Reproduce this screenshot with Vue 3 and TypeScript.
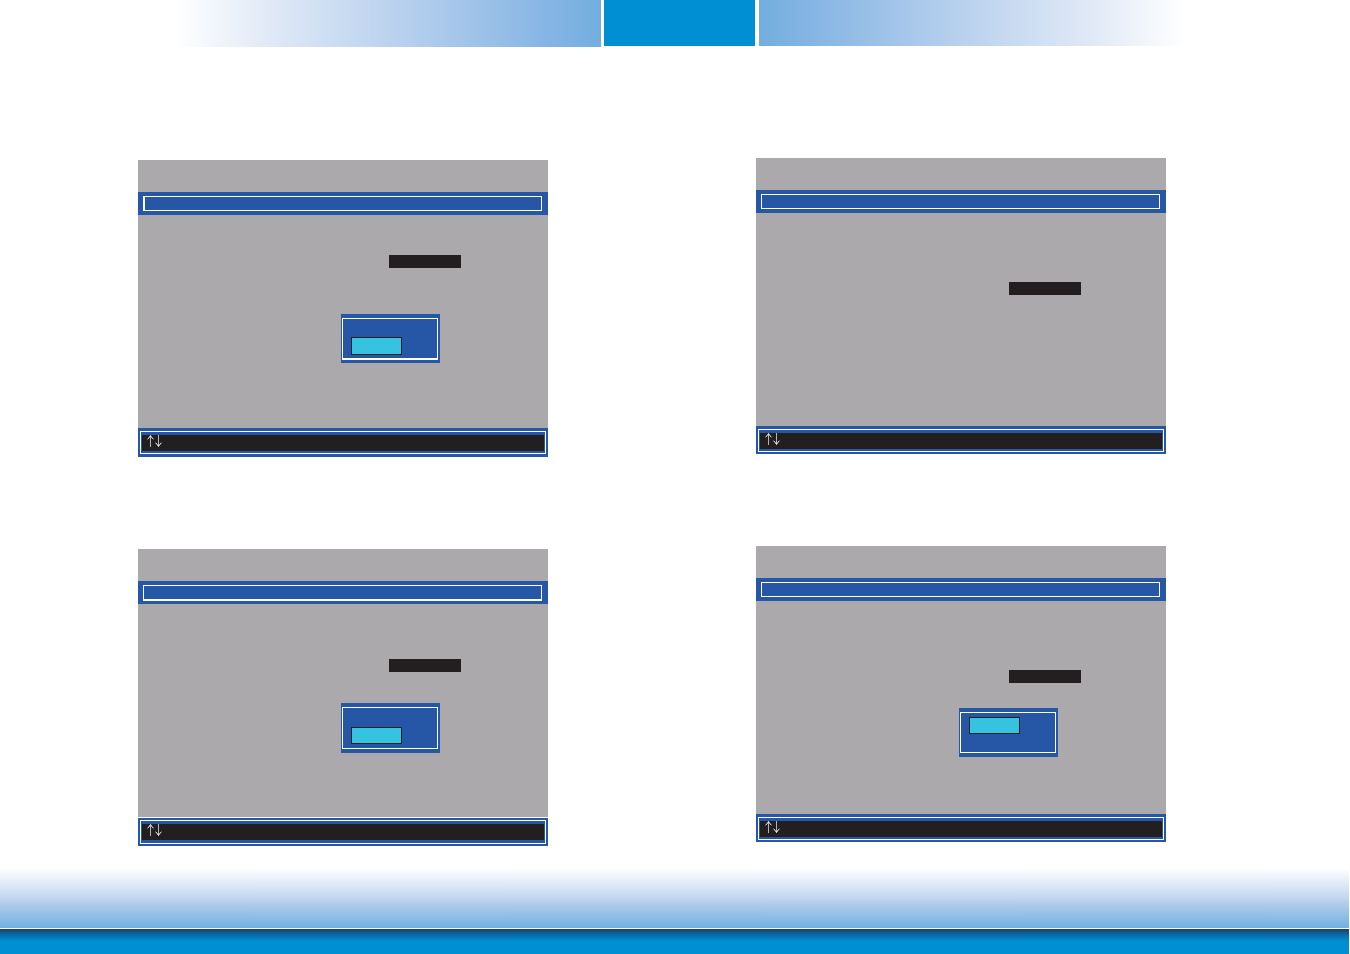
<script setup lang="ts">
interface Screen {
  id: string
  layout: string
  popup: boolean
  selected: number
}

const columns: { side: string; screens: Screen[] }[] = [
  {
    side: 'column-left',
    screens: [
      { id: 'a', layout: 'field-high', popup: true, selected: 1 },
      { id: 'b', layout: 'field-middle footer-split', popup: true, selected: 1 },
    ],
  },
  {
    side: 'column-right',
    screens: [
      { id: 'c', layout: 'field-low', popup: false, selected: 0 },
      { id: 'd', layout: 'field-low', popup: true, selected: 0 },
    ],
  },
]
</script>

<template>
  <div class="page">
    <header class="top">
      <div class="fade fade-left"></div>
      <div class="tab"></div>
      <div class="fade fade-right"></div>
    </header>

    <main class="content">
      <div v-for="column in columns" :key="column.side" class="column" :class="column.side">
        <section v-for="screen in column.screens" :key="screen.id" class="screen" :class="screen.layout">
          <div class="heading"></div>
          <div class="title-bar"><div class="title-frame"></div></div>
          <div class="body">
            <input class="field" type="text" readonly aria-label="Value" />
            <div v-if="screen.popup" class="popup">
              <div class="popup-frame">
                <button
                  v-for="n in 2"
                  :key="n"
                  type="button"
                  class="option"
                  :class="{ selected: n - 1 === screen.selected }"
                  :aria-label="`Option ${n}`"
                ></button>
              </div>
            </div>
          </div>
          <div class="keys">
            <div class="keys-frame">
              <div class="keys-bar">
                <svg class="arrows" viewBox="0 0 16 12" role="img" aria-label="Up and down arrows">
                  <path class="stem" d="M3.5 1V12M11.5 0V11" />
                  <path class="head" d="M0.5 4Q2.5 3 3.5 0.5Q4.5 3 6.5 4M8.5 8Q10.5 9 11.5 11.5Q12.5 9 14.5 8" />
                </svg>
              </div>
            </div>
          </div>
        </section>
      </div>
    </main>

    <footer class="bottom">
      <div class="bottom-fade"></div>
      <div class="bottom-bar"></div>
    </footer>
  </div>
</template>

<style>
body {
  margin: 0;
  background: #fff;
}
</style>

<style scoped>
* {
  box-sizing: border-box;
}

.page {
  display: flex;
  flex-direction: column;
  min-height: 100vh;
  padding-right: 1px;
  background: #fff;
}

.top {
  display: flex;
  align-items: flex-start;
  padding: 0 164px 0 175px;
}

.fade {
  flex: 1;
  height: 46px;
}

.fade-left {
  height: 47px;
  margin-right: 3px;
  background: linear-gradient(to right, #fff, #e0e9f6 22%, #b5cfed 55%, #82b3e3 90%, #72aede);
}

.fade-right {
  margin-left: 4px;
  background: linear-gradient(to left, #fff, #e0e9f6 22%, #b5cfed 55%, #82b3e3 90%, #72aede);
}

.tab {
  width: 151px;
  height: 46px;
  background: #008fd3;
}

.content {
  display: grid;
  grid-template-columns: 1fr 1fr;
  column-gap: 208px;
  padding: 111px 183px 0 138px;
}

.column {
  display: flex;
  flex-direction: column;
}

.column-left {
  padding-top: 2px;
  gap: 93px;
}

.column-right {
  gap: 92px;
}

.screen {
  display: flex;
  flex-direction: column;
  background: #aba9ac;
}

.heading {
  height: 32px;
}

.title-bar {
  height: 23px;
  padding: 4px 6px 0 5px;
  background: #2657a7;
}

.title-frame {
  height: 15px;
  border: 1px solid #fff;
}

.field-high .title-frame {
  border-left-width: 2px;
}

.field-middle .title-frame {
  height: 16px;
  border-bottom-width: 2px;
}

.body {
  display: flex;
  flex-direction: column;
  align-items: flex-start;
  min-height: 213px;
}

.field {
  width: 72px;
  height: 13px;
  margin: 0 0 0 251px;
  padding: 0;
  border: 0;
  border-radius: 0;
  outline: 0;
  background: #231f20;
  color: #fff;
  font: 10px "Liberation Sans", Arial, sans-serif;
}

.popup {
  height: 49px;
  width: 99px;
  margin-left: 203px;
  padding: 4px 2px 0 1px;
  background: #2657a7;
}

.popup-frame {
  display: flex;
  flex-direction: column;
  gap: 1px;
  height: 41px;
  padding: 4px 8px 0;
  border: 1px solid #fff;
}

.option {
  flex-shrink: 0;
  width: 51px;
  height: 17px;
  padding: 0;
  border: 1px solid transparent;
  border-radius: 0;
  background: transparent;
}

.option:not(.selected) {
  height: 13px;
}

.option.selected {
  border-color: #231f20;
  background: #36c3e0;
}

.field-high .body {
  padding-top: 40px;
}

.field-high .popup {
  margin-top: 46px;
}

.field-high .popup-frame {
  height: 42px;
  border-bottom-width: 2px;
}

.field-high .option.selected {
  height: 18px;
}

.field-middle .body {
  padding-top: 55px;
}

.field-middle .popup {
  height: 50px;
  margin-top: 31px;
}

.field-middle .popup-frame {
  gap: 2px;
  height: 42px;
}

.field-low .body {
  padding-top: 69px;
}

.field-low .field {
  margin-left: 253px;
}

.field-low .popup {
  margin-top: 25px;
}

.keys {
  height: 28px;
  padding: 3px 2px 2px;
  background: #2657a7;
}

.footer-split .keys {
  height: 29px;
  padding-top: 2px;
  border-top: 1px solid #fff;
}

.field-high .keys {
  height: 29px;
}

.field-high {
  margin-bottom: -1px;
}

.keys-frame {
  height: 23px;
  padding: 3px 1px 2px 1px;
  border: 1px solid #fff;
}

.footer-split .keys-frame {
  height: 24px;
}

.keys-bar {
  display: flex;
  align-items: flex-start;
  height: 16px;
  padding-left: 5px;
  background: #231f20;
}

.arrows {
  width: 16px;
  height: 12px;
  fill: none;
}

.stem {
  stroke: #b5b3b4;
  stroke-width: 1;
}

.head {
  stroke: #fff;
  stroke-width: 1;
}

.bottom {
  margin-top: auto;
}

.bottom-fade {
  height: 60px;
  background: linear-gradient(to bottom, #fff, #e6edf8 22%, #c5d8f0 48%, #adcaeb 62%, #8abde5 84%, #72aede);
}

.bottom-bar {
  height: 26px;
  border-top: 1px solid #fff;
  background: linear-gradient(to bottom, #1a3f74, #0b659f 5px, #008fd3 12px);
  background-clip: padding-box;
}
</style>
